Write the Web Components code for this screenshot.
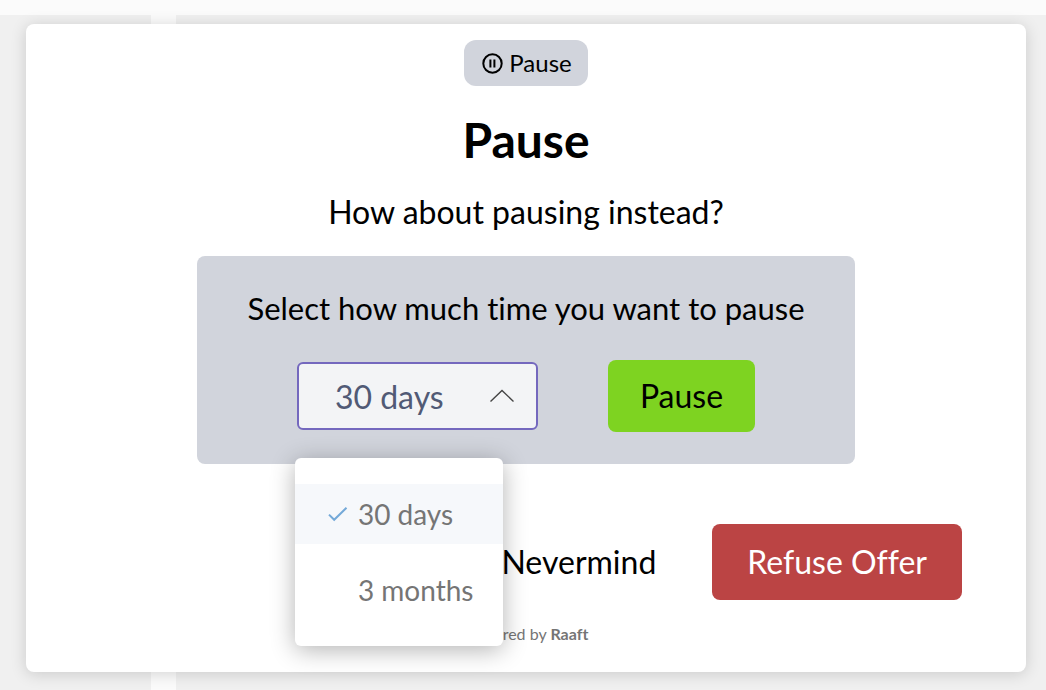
<!DOCTYPE html>
<html lang="en">
<head>
<meta charset="utf-8">
<meta name="viewport" content="width=device-width, initial-scale=1">
<title>Pause</title>
<style>
  body {
    margin: 0;
    font-family: Lato, sans-serif;
    font-size: 32px;
    line-height: 40px;
    font-variant-ligatures: none;
    color: #000;
  }
</style>
</head>
<body>
<offer-page>
  <offer-card>
    <offer-badge slot="badge">Pause</offer-badge>
    <span slot="title">Pause</span>
    <span slot="message">How about pausing instead?</span>
    <pause-panel>
      <span slot="label">Select how much time you want to pause</span>
      <duration-select options="30 days,3 months" value="30 days" label="Select how much time you want to pause"></duration-select>
      <action-button variant="accept">Pause</action-button>
    </pause-panel>
    <action-button slot="actions" variant="plain">Nevermind</action-button>
    <action-button slot="actions" variant="refuse">Refuse Offer</action-button>
    <span slot="footer">Powered by <b>Raaft</b></span>
  </offer-card>
</offer-page>

<script>
"use strict";

(() => {
  customElements.define("offer-page", class extends HTMLElement {
    constructor() {
      super();

      this.attachShadow({mode: "open"}).innerHTML = `
        <style>
          :host {
            display: block;
            box-sizing: border-box;
            min-height: 100vh;
            padding: 24px 20px 18px 26px;
            background:
              linear-gradient(#FBFBFB, #FBFBFB) 0 0 / 100% 15px no-repeat,
              linear-gradient(#FBFBFB, #FBFBFB) 151px 0 / 25px 100% no-repeat,
              #F0F0F0;
          }
        </style>

        <slot></slot>
      `;
    }
  });

  customElements.define("offer-card", class extends HTMLElement {
    constructor() {
      super();

      this.attachShadow({mode: "open"}).innerHTML = `
        <style>
          :host {
            display: flex;
            flex-direction: column;
            align-items: center;
            box-sizing: border-box;
            padding: 16px 64px 26px;
            border-radius: 8px;
            background-color: #FFF;
            box-shadow: 0 2px 16px rgba(0, 0, 0, 0.16);
            text-align: center;
          }

          h1 {
            margin: 24px 0 0;
            font-size: 48px;
            line-height: 60px;
            font-weight: 700;
          }

          p {
            margin: 22px 0 24px;
          }

          #actions {
            display: flex;
            align-self: stretch;
            justify-content: flex-end;
            gap: 24px;
            margin-top: 60px;
          }

          footer {
            margin-top: 22px;
            font-size: 16px;
            line-height: 24px;
            color: #757575;
          }
        </style>

        <slot name="badge"></slot>
        <h1><slot name="title"></slot></h1>
        <p><slot name="message"></slot></p>
        <slot></slot>
        <div id="actions"><slot name="actions"></slot></div>
        <footer><slot name="footer"></slot></footer>
      `;
    }
  });

  customElements.define("offer-badge", class extends HTMLElement {
    constructor() {
      super();

      this.attachShadow({mode: "open"}).innerHTML = `
        <style>
          :host {
            display: flex;
            align-items: center;
            gap: 6px;
            padding: 8px 16px 8px 18px;
            border-radius: 12px;
            background-color: #D1D4DC;
            font-size: 24px;
            line-height: 30px;
          }
        </style>

        <svg width="21" height="21" viewBox="0 0 21 21" fill="none" stroke="currentColor" stroke-width="2" aria-hidden="true">
          <circle cx="10.5" cy="10.5" r="9.2"/>
          <path d="M8.4 6.5v8M12.4 6.5v8"/>
        </svg>
        <span><slot></slot></span>
      `;
    }
  });

  customElements.define("pause-panel", class extends HTMLElement {
    constructor() {
      super();

      this.attachShadow({mode: "open"}).innerHTML = `
        <style>
          :host {
            display: block;
            padding: 32px 50px;
            border-radius: 8px;
            background-color: #D1D4DC;
          }

          #label {
            font-size: 31px;
          }

          #controls {
            display: flex;
            justify-content: center;
            align-items: center;
            gap: 70px;
            margin-top: 32px;
          }
        </style>

        <div id="label"><slot name="label"></slot></div>
        <div id="controls"><slot></slot></div>
      `;
    }
  });

  customElements.define("duration-select", class extends HTMLElement {
    constructor() {
      super();

      this.attachShadow({mode: "open"}).innerHTML = `
        <style>
          :host {
            display: grid;
            position: relative;
            align-items: center;
          }

          select, #arrow {
            grid-area: 1 / 1;
          }

          select {
            appearance: none;
            box-sizing: border-box;
            height: 68px;
            width: 241px;
            margin: 0;
            padding: 0 56px 0 36px;
            border: 2px solid #7468BE;
            border-radius: 6px;
            outline: none;
            background-color: #F3F4F6;
            font-family: inherit;
            font-size: 32px;
            color: #515A75;
            cursor: pointer;
          }

          #arrow {
            justify-self: end;
            margin-right: 24px;
            pointer-events: none;
          }

          #menu {
            position: absolute;
            z-index: 10;
            top: calc(100% + 28px);
            left: -2px;
            display: flex;
            flex-direction: column;
            gap: 16px;
            margin: 0;
            padding: 26px 0;
            border-radius: 6px;
            background-color: #FFF;
            box-shadow: 0 4px 24px rgba(0, 0, 0, 0.3);
            list-style: none;
            font-size: 28px;
            color: #757575;
          }

          li {
            display: flex;
            align-items: center;
            gap: 10px;
            height: 60px;
            padding: 0 30px 0 32px;
            white-space: nowrap;
            cursor: pointer;
          }

          li svg {
            visibility: hidden;
          }

          li[aria-selected="true"] {
            background-color: #F6F8FB;
          }

          li[aria-selected="true"] svg {
            visibility: visible;
          }
        </style>

        <select></select>
        <svg id="arrow" width="24" height="14" viewBox="0 0 24 14" fill="none" stroke="#444" stroke-width="1.4" aria-hidden="true">
          <path d="M.5 12.5 12 1.5l11.5 11"/>
        </svg>
        <ul id="menu" role="listbox"></ul>
      `;

      this.selectElem = this.shadowRoot.querySelector("select");
      this.selectElem.addEventListener("change", () => this.choose(this.selectElem.value));

      this.menuElem = this.shadowRoot.getElementById("menu");
      this.menuElem.addEventListener("click", event => {
        const item = event.target.closest("li");
        if (item) this.choose(item.dataset.value);
      });
    }

    connectedCallback() {
      const label = this.getAttribute("label");
      this.selectElem.setAttribute("aria-label", label);
      this.menuElem.setAttribute("aria-label", label);

      for (const value of this.getAttribute("options").split(",")) {
        this.selectElem.add(new Option(value, value));

        const item = document.createElement("li");
        item.setAttribute("role", "option");
        item.dataset.value = value;
        item.innerHTML = `
          <svg width="21" height="16" viewBox="0 0 21 16" fill="none" stroke="#74A9D8" stroke-width="2" aria-hidden="true">
            <path d="M2 8.6 7.2 13.8 19.5 1.7"/>
          </svg>
          <span>${value}</span>
        `;
        this.menuElem.append(item);
      }

      this.choose(this.getAttribute("value"));
    }

    choose (value) {
      this.selectElem.value = value;
      for (const item of this.menuElem.children) {
        item.setAttribute("aria-selected", item.dataset.value === value);
      }
    }
  });

  customElements.define("action-button", class extends HTMLElement {
    constructor() {
      super();

      this.attachShadow({mode: "open"}).innerHTML = `
        <style>
          :host {
            display: block;
          }

          button {
            margin: 0;
            padding: 16px 32px;
            border: 0;
            border-radius: 8px;
            background-color: transparent;
            font: inherit;
            color: inherit;
            cursor: pointer;
          }

          :host([variant="accept"]) button {
            background-color: #7ED321;
          }

          :host([variant="plain"]) button {
            padding: 18px 32px;
          }

          :host([variant="refuse"]) button {
            padding: 18px 35px;
            background-color: #BB4444;
            color: #FFF;
          }
        </style>

        <button type="button"><slot></slot></button>
      `;
    }
  });
})();
</script>
</body>
</html>
